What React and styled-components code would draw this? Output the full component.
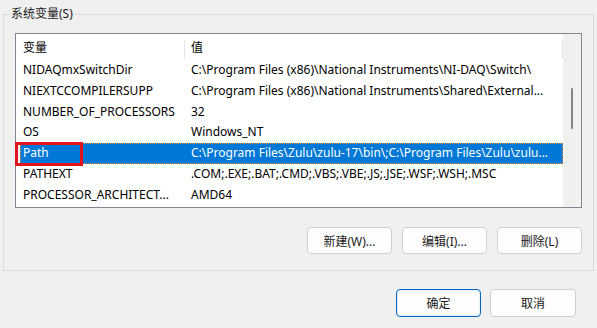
import styled, { createGlobalStyle } from 'styled-components';

const GlobalStyle = createGlobalStyle`
  html, body {
    margin: 0;
    padding: 0;
    background: #f0f0f0;
  }
  body {
    font-family: "Noto Sans", "Noto Sans CJK SC", sans-serif;
    font-size: 12px;
    color: #000;
  }
`;

const rows = [
  { name: 'NIDAQmxSwitchDir', value: 'C:\\Program Files (x86)\\National Instruments\\NI-DAQ\\Switch\\' },
  { name: 'NIEXTCCOMPILERSUPP', value: 'C:\\Program Files (x86)\\National Instruments\\Shared\\External...' },
  { name: 'NUMBER_OF_PROCESSORS', value: '32' },
  { name: 'OS', value: 'Windows_NT' },
  { name: 'Path', value: 'C:\\Program Files\\Zulu\\zulu-17\\bin\\;C:\\Program Files\\Zulu\\zulu...', selected: true },
  { name: 'PATHEXT', value: '.COM;.EXE;.BAT;.CMD;.VBS;.VBE;.JS;.JSE;.WSF;.WSH;.MSC' },
  { name: 'PROCESSOR_ARCHITECT...', value: 'AMD64' },
];

const App = () => {
  return (
    <Dialog>
      <GlobalStyle />

      {/* SYSTEM VARIABLES GROUP */}
      <Group>
        <Legend>系统变量(S)</Legend>

        <ListBox>
          <ListMain>
            <Header>
              <HeadCell $width="169px">变量</HeadCell>
              <HeadCell $grow>值</HeadCell>
            </Header>

            {rows.map((row) => (
              <Row key={row.name} $selected={row.selected}>
                <NameCell>
                  {row.name}
                  {row.selected && <Marker />}
                </NameCell>
                <ValueCell>{row.value}</ValueCell>
              </Row>
            ))}
          </ListMain>

          <Scrollbar>
            <Thumb />
          </Scrollbar>
        </ListBox>

        <ButtonRow>
          <Button>新建(W)...</Button>
          <Button>编辑(I)...</Button>
          <Button>删除(L)</Button>
        </ButtonRow>
      </Group>

      {/* DIALOG BUTTONS */}
      <Footer>
        <Button $primary $height="28px">确定</Button>
        <Button $height="28px" $width="86px">取消</Button>
      </Footer>
    </Dialog>
  );
};

/* ================= STYLES ================= */

const Dialog = styled.div`
  width: 597px;
  height: 328px;
  box-sizing: border-box;
  padding: 6px 3px 0 3px;
  overflow: hidden;
`;

const Group = styled.fieldset`
  margin: 0;
  padding: 11px 11px 16px 11px;
  border: 1px solid #dadada;
  min-width: 0;
`;

const Legend = styled.legend`
  margin-left: -6px;
  padding: 0 2px;
  line-height: 16px;
  height: 16px;
  color: #1a1a1a;
`;

const ListBox = styled.div`
  display: flex;
  height: 175px;
  box-sizing: border-box;
  border: 1px solid #828790;
  background: #fff;
`;

const ListMain = styled.div`
  flex: 1;
  min-width: 0;
  display: flex;
  flex-direction: column;
`;

const Header = styled.div`
  display: flex;
  height: 26px;
  align-items: flex-end;
`;

const HeadCell = styled.div`
  box-sizing: border-box;
  width: ${(p) => p.$width || 'auto'};
  flex: ${(p) => (p.$grow ? 1 : 'none')};
  height: 19px;
  margin-bottom: 1px;
  padding: 0 0 6px ${(p) => (p.$grow ? '6px' : '7px')};
  display: flex;
  align-items: center;
  border-right: 1px solid #e5e5e5;
`;

const Row = styled.div`
  display: flex;
  height: 20.8px;
  line-height: 20px;
  margin-left: 4px;
  color: ${(p) => (p.$selected ? '#fff' : '#000')};
  background: ${(p) => (p.$selected ? '#0078d7' : 'transparent')};
  outline: ${(p) => (p.$selected ? '1px dotted #ff8728' : 'none')};
  outline-offset: -1px;
`;

const NameCell = styled.div`
  position: relative;
  width: 165px;
  box-sizing: border-box;
  padding-left: 3px;
  white-space: nowrap;
`;

const ValueCell = styled.div`
  flex: 1;
  min-width: 0;
  padding-left: 6px;
  padding-right: 4px;
  white-space: nowrap;
  overflow: hidden;
  text-overflow: ellipsis;
`;

/* red annotation box drawn over the selected name */
const Marker = styled.span`
  position: absolute;
  left: -5px;
  top: -1px;
  width: 68px;
  height: 24px;
  box-sizing: border-box;
  border: 3px solid #e2141c;
`;

const Scrollbar = styled.div`
  position: relative;
  width: 18px;
  background: #f0f0f0;
`;

const Thumb = styled.div`
  position: absolute;
  left: 8px;
  top: 54px;
  width: 2px;
  height: 41px;
  border-radius: 1px;
  background: #858585;
`;

const ButtonRow = styled.div`
  display: flex;
  justify-content: flex-end;
  gap: 10px;
  margin-top: 19px;
`;

const Footer = styled.div`
  display: flex;
  justify-content: flex-end;
  gap: 9px;
  margin-top: 18px;
  padding-right: 18px;
`;

const Button = styled.button`
  width: ${(p) => p.$width || '85px'};
  height: ${(p) => p.$height || '27px'};
  padding: 0;
  box-sizing: border-box;
  font-family: "Noto Sans", "Noto Sans CJK SC", sans-serif;
  font-size: 12px;
  color: #1a1a1a;
  background: #fdfdfd;
  border: 1px solid ${(p) => (p.$primary ? '#0067c0' : '#d0d0d0')};
  box-shadow: ${(p) => (p.$primary ? 'inset 0 0 0 1px #e6f0fa' : 'none')};
  border-radius: 4px;
  cursor: pointer;
`;

export default App;
